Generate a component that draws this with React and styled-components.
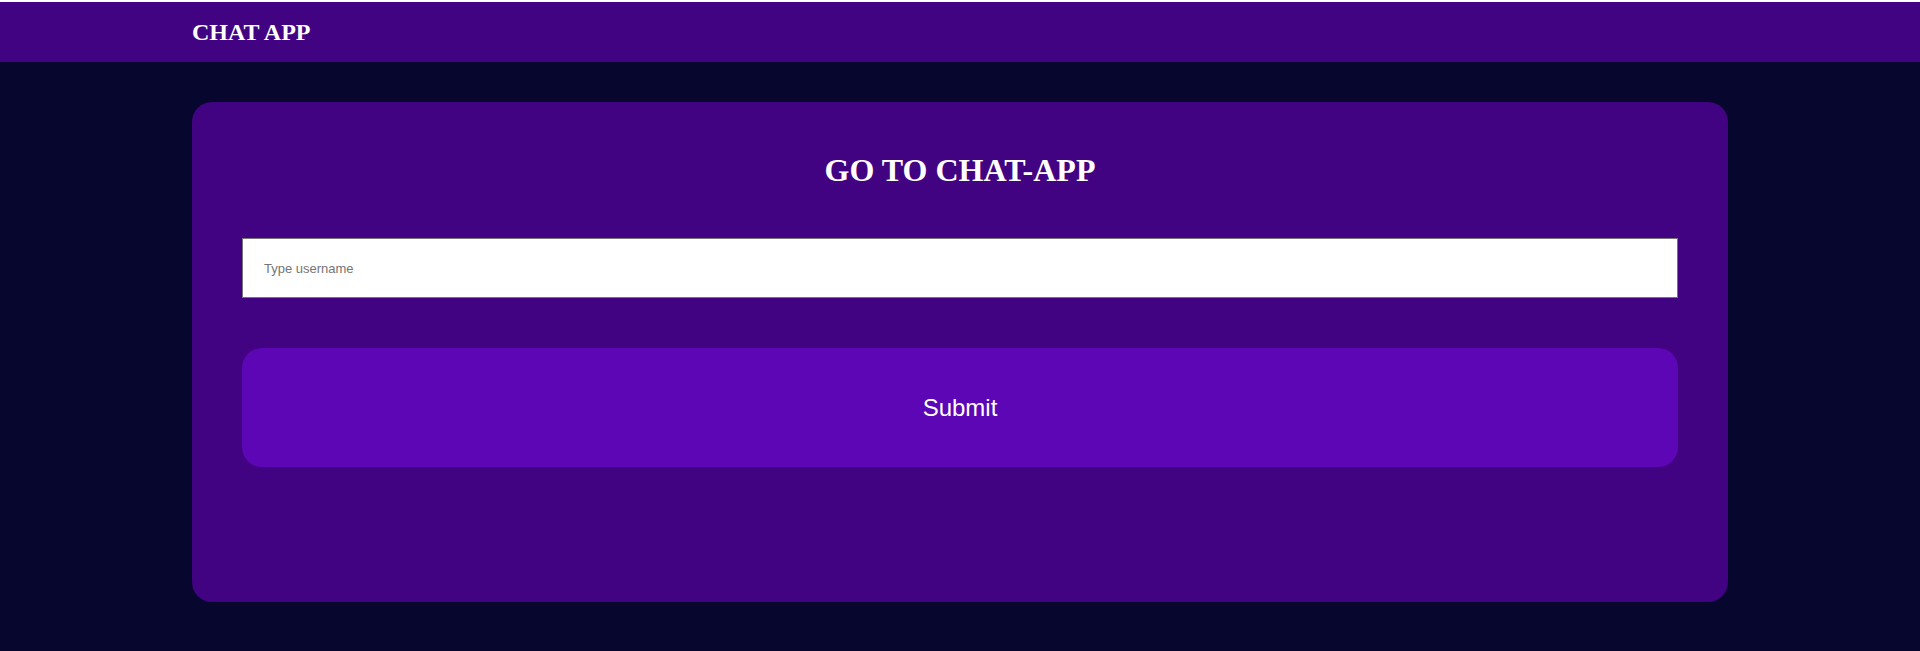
import styled, { createGlobalStyle } from "styled-components"

const GlobalStyle = createGlobalStyle`
    html, body {
        margin: 0;
        padding: 0;
        background: #ffffff;
        font-family: "Liberation Serif", "Times New Roman", serif;
    }
`

const Page = styled.div`
    margin-top: 2px;
    min-height: 649px;
    background: #06062f;
    display: flex;
    flex-direction: column;
`

const TopBar = styled.header`
    height: 60px;
    background: #420382;
    display: flex;
    align-items: center;
    padding: 0 10%;
`

const Brand = styled.h2`
    margin: 0;
    color: #ffffff;
    font-size: 24px;
    font-weight: bold;
`

const Main = styled.main`
    display: flex;
    justify-content: center;
    padding-top: 40px;
`

const Card = styled.section`
    width: 80%;
    height: 500px;
    box-sizing: border-box;
    padding: 50px;
    background: #420382;
    border-radius: 20px;
    display: flex;
    flex-direction: column;
`

const Title = styled.h1`
    margin: 0 0 49px;
    color: #ffffff;
    font-size: 32px;
    text-align: center;
`

const UserInput = styled.input`
    height: 60px;
    box-sizing: border-box;
    padding: 0 21px;
    border: 1px solid #767676;
    background: #ffffff;
    font-family: "Liberation Sans", Arial, sans-serif;
    font-size: 13px;
    outline: none;

    ::placeholder {
        color: #757575;
    }
`

const SubmitButton = styled.button`
    margin-top: 50px;
    height: 119px;
    border: none;
    border-radius: 20px;
    background: #5c06b5;
    color: #ffffff;
    font-family: "Liberation Sans", Arial, sans-serif;
    font-size: 24px;
    cursor: pointer;

    :hover {
        background: #6610c0;
    }
`

export default function App() {
    return (
        <Page>
            <GlobalStyle />
            <TopBar>
                <Brand>CHAT APP</Brand>
            </TopBar>
            <Main>
                <Card>
                    <Title>GO TO CHAT-APP</Title>
                    <UserInput type="text" placeholder="Type username" />
                    <SubmitButton>Submit</SubmitButton>
                </Card>
            </Main>
        </Page>
    )
}
